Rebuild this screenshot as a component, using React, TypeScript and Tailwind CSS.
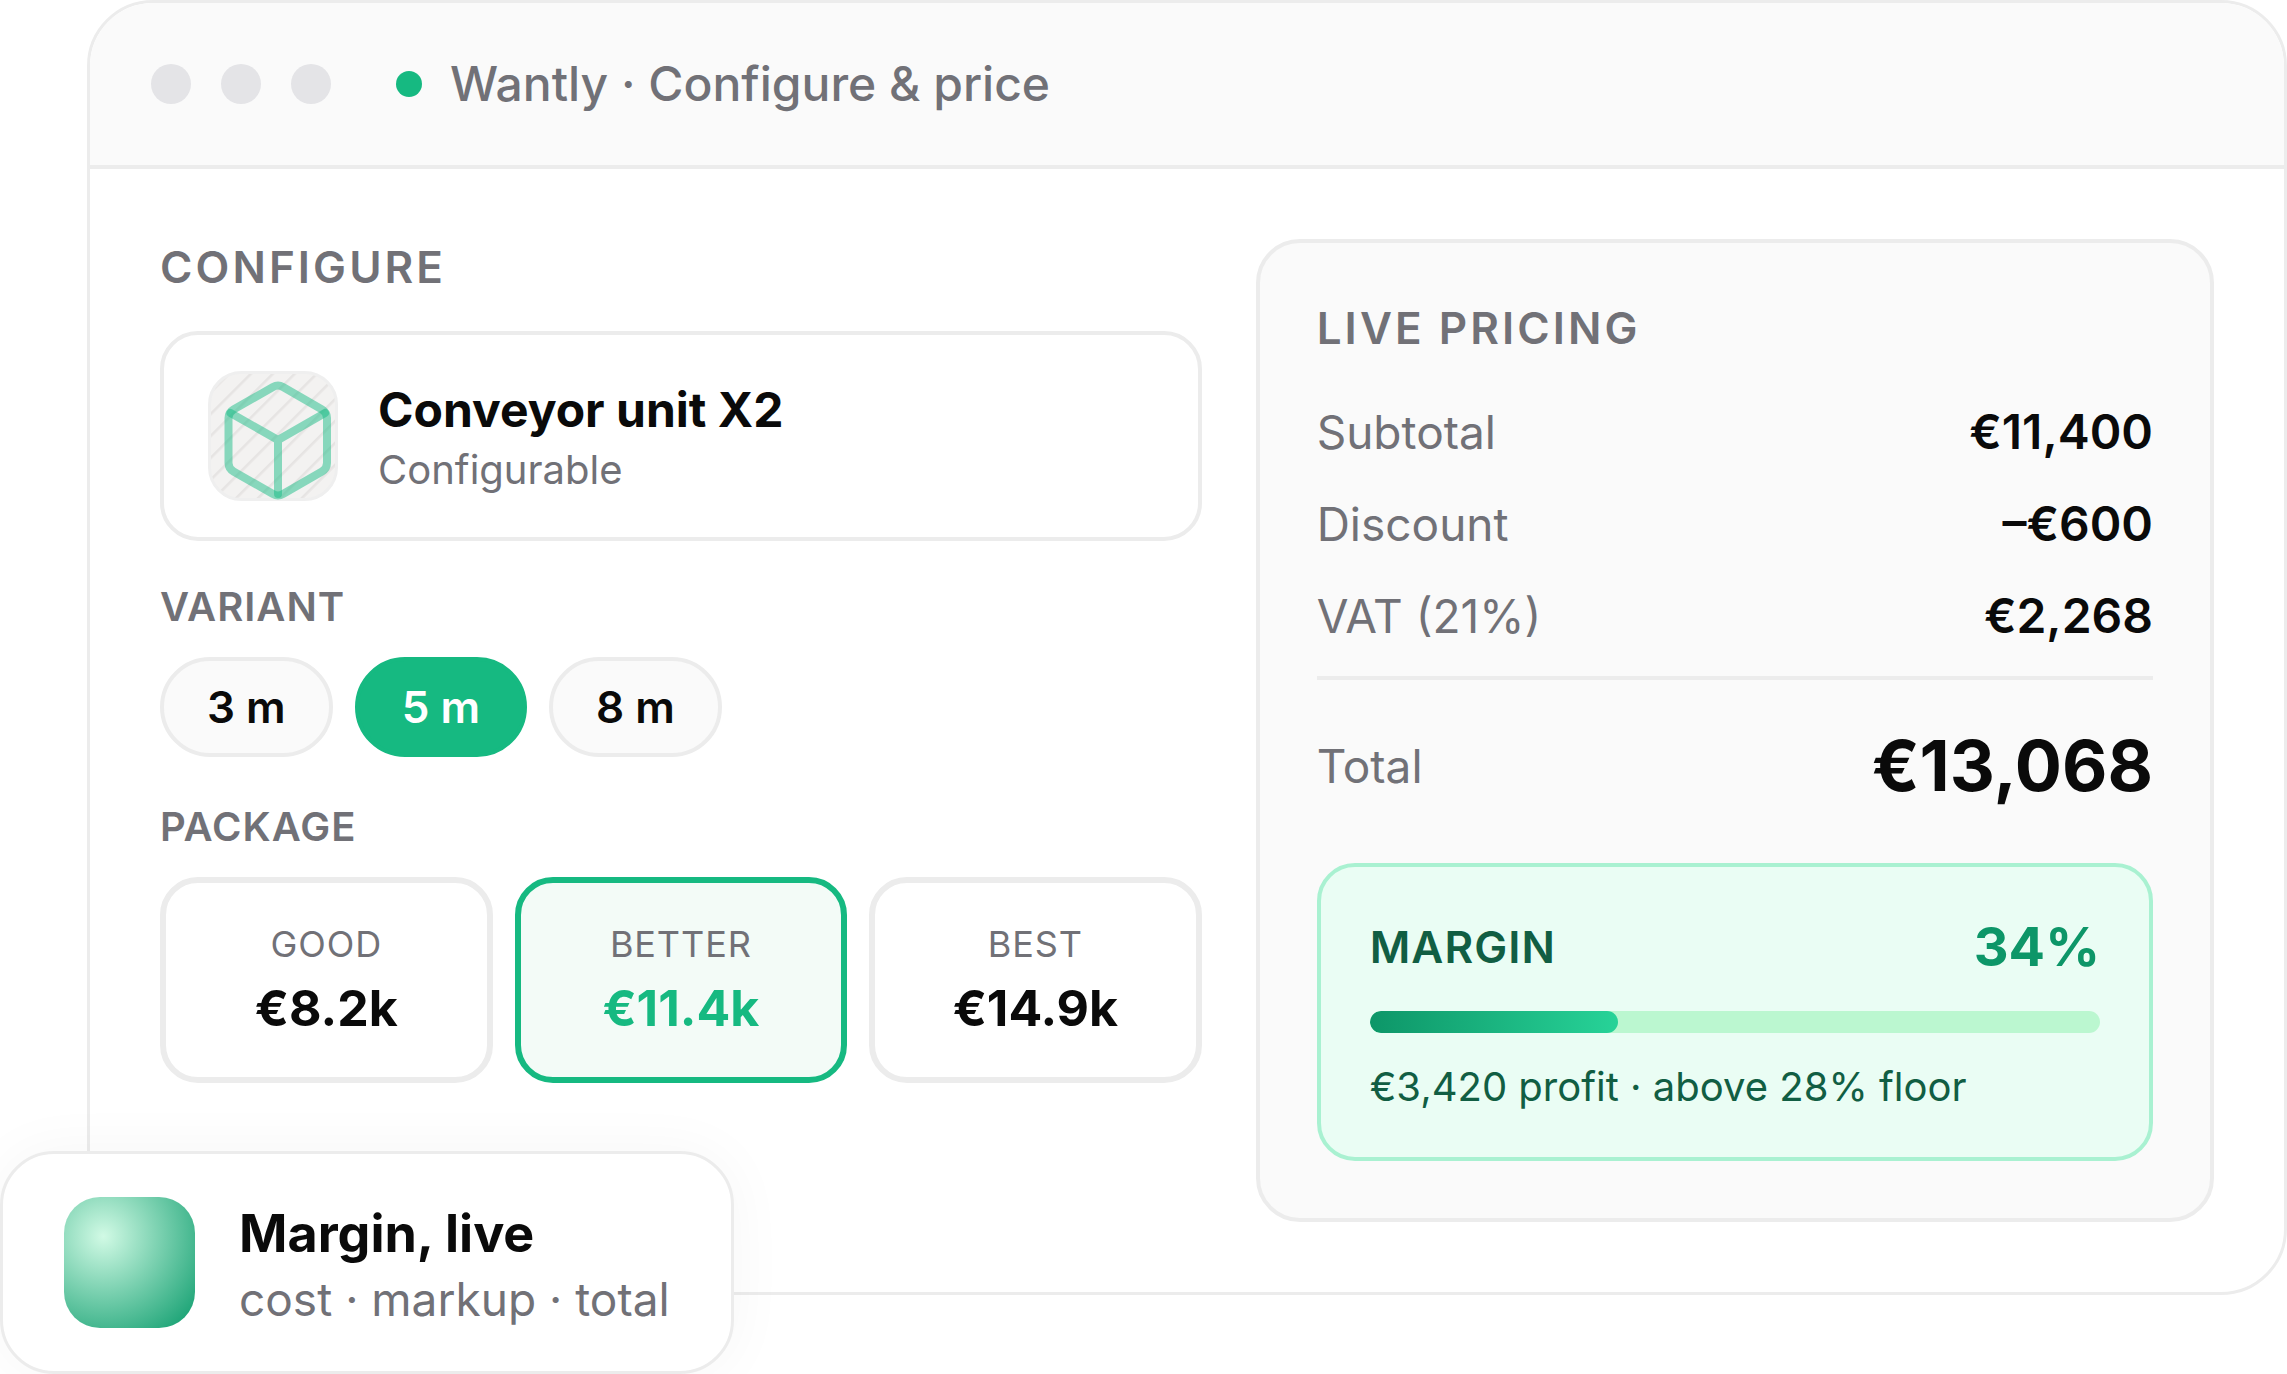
import { useState } from 'react';

const variants = ['3 m', '5 m', '8 m'];

const packages = [
  { name: 'Good', price: '€8.2k' },
  { name: 'Better', price: '€11.4k' },
  { name: 'Best', price: '€14.9k' },
];

const lines = [
  { label: 'Subtotal', value: '€11,400' },
  { label: 'Discount', value: '–€600' },
  { label: 'VAT (21%)', value: '€2,268' },
];

const margin = 34;

function ProductIcon() {
  return (
    <svg viewBox="0 0 130 130" className="size-[130px] shrink-0" aria-hidden="true">
      <defs>
        <pattern id="hatch" width="15.5" height="15.5" patternUnits="userSpaceOnUse" patternTransform="rotate(45)">
          <rect width="15.5" height="15.5" fill="#f3f2f1" />
          <rect width="2.5" height="15.5" fill="#e6e4e3" />
        </pattern>
      </defs>
      <rect x="1.5" y="1.5" width="127" height="127" rx="32" fill="url(#hatch)" stroke="#efefef" strokeWidth="3" />
      <g fill="none" stroke="#10b981" strokeOpacity="0.48" strokeWidth="8" strokeLinecap="round" strokeLinejoin="round">
        <path d="M119 92V47a10 10 0 0 0-5-8.500L75 16a10 10 0 0 0-10 0L25.500 38.500a10 10 0 0 0-5 8.500v45a10 10 0 0 0 5 8.500L65 123a10 10 0 0 0 10 0l39-22.500a10 10 0 0 0 5-8.500z" />
        <path d="M22.500 42 70 69l47-27M70 123V69" />
      </g>
    </svg>
  );
}

export default function App() {
  const [variant, setVariant] = useState('5 m');
  const [selected, setSelected] = useState('Better');

  return (
    <div className="relative bg-white pl-[87px] pb-[79px] font-[Inter,sans-serif] text-[#0a0a0a]">
      <main className="overflow-hidden rounded-[66px] border-[3px] border-[#ececec] bg-white">
        <header className="flex h-[166px] items-center border-b-4 border-[#ececec] bg-[#fafafa] px-[61px]">
          <div className="flex gap-[30px]">
            <span className="size-10 rounded-full bg-[#e4e4e7]"></span>
            <span className="size-10 rounded-full bg-[#e4e4e7]"></span>
            <span className="size-10 rounded-full bg-[#e4e4e7]"></span>
          </div>
          <span className="ml-[65px] size-[26px] rounded-full bg-[#16b981]"></span>
          <h1 className="ml-7 text-[48px] leading-[64px] font-medium text-[#717177]">Wantly · Configure &amp; price</h1>
        </header>

        <div className="grid grid-cols-[25fr_23fr] gap-[54px] p-[70px]">
          <section>
            <h2 className="text-[44px] leading-[56px] font-semibold tracking-[0.07em] text-[#717177] uppercase">Configure</h2>
            <div className="mt-9 flex items-center gap-10 rounded-[38px] border-4 border-[#ececec] px-11 py-9">
              <ProductIcon />
              <div>
                <h3 className="text-[48px] leading-[68px] font-bold">Conveyor unit X2</h3>
                <p className="text-[40px] leading-[52px] text-[#717177]">Configurable</p>
              </div>
            </div>

            <h3 className="mt-10 text-[40px] leading-[52px] font-semibold tracking-wide text-[#717177] uppercase">Variant</h3>
            <div className="mt-6 flex gap-[22px]">
              {variants.map((v) => (
                <button
                  key={v}
                  type="button"
                  aria-pressed={v === variant}
                  onClick={() => setVariant(v)}
                  className={`rounded-full border-4 px-[43px] py-[18px] text-[44px] leading-[56px] font-semibold ${
                    v === variant ? 'border-[#16b981] bg-[#16b981] text-white' : 'border-[#ececec] bg-[#fafafa]'
                  }`}
                >
                  {v}
                </button>
              ))}
            </div>

            <h3 className="mt-11 text-[40px] leading-[52px] font-semibold tracking-wide text-[#717177] uppercase">Package</h3>
            <div className="mt-6 grid grid-cols-3 gap-[22px]">
              {packages.map((p) => (
                <button
                  key={p.name}
                  type="button"
                  aria-pressed={p.name === selected}
                  onClick={() => setSelected(p.name)}
                  className={`rounded-[38px] border-[6px] py-[37px] text-center ${
                    p.name === selected ? 'border-[#16b981] bg-[#f3fbf7]' : 'border-[#ececec] bg-white'
                  }`}
                >
                  <span className="block text-[36px] leading-[48px] tracking-wide text-[#717177] uppercase">{p.name}</span>
                  <span className={`mt-2 block text-[50px] leading-[64px] font-bold ${p.name === selected ? 'text-[#16b981]' : ''}`}>
                    {p.price}
                  </span>
                </button>
              ))}
            </div>
          </section>

          <section className="rounded-[44px] border-4 border-[#ececec] bg-[#fafafa] p-[57px]">
            <h2 className="text-[44px] leading-[56px] font-semibold tracking-[0.07em] text-[#717177] uppercase">Live pricing</h2>
            <dl className="mt-11 flex flex-col gap-7 border-b-4 border-[#ececec] pb-7 text-[46px] leading-[64px]">
              {lines.map((line) => (
                <div key={line.label} className="flex justify-between">
                  <dt className="text-[#717177]">{line.label}</dt>
                  <dd className="text-[48px] font-semibold">{line.value}</dd>
                </div>
              ))}
            </dl>
            <dl className="mt-10 flex items-center justify-between">
              <dt className="text-[46px] leading-[64px] text-[#717177]">Total</dt>
              <dd className="text-[70px] leading-[92px] font-bold">€13,068</dd>
            </dl>

            <div className="mt-[51px] rounded-[38px] border-4 border-[#a9f1d1] bg-[#eafdf4] px-[49px] py-[42px]">
              <div className="flex items-center justify-between">
                <h3 className="text-[44px] leading-[56px] font-semibold tracking-wide text-[#115e43] uppercase">Margin</h3>
                <span className="text-[54px] leading-[76px] font-bold text-[#0d9668]">{margin}%</span>
              </div>
              <div
                role="progressbar"
                aria-label="Margin"
                aria-valuenow={margin}
                className="mt-[26px] h-[22px] overflow-hidden rounded-full bg-[#bbf7d0]"
              >
                <div className="h-full rounded-full bg-linear-to-r from-[#0d9668] to-[#27d398]" style={{ width: `${margin}%` }}></div>
              </div>
              <p className="mt-[26px] text-[40px] leading-[56px] text-[#115e43]">€3,420 profit · above 28% floor</p>
            </div>
          </section>
        </div>
      </main>

      <aside className="absolute bottom-0 left-0 flex items-center gap-11 rounded-[54px] border-[3px] border-[#ececec] bg-white px-[61px] py-[43px] shadow-[0_0_60px_rgba(0,0,0,0.04)]">
        <div className="size-[131px] rounded-[36px] bg-[radial-gradient(circle_at_30%_30%,#d1fae5,#0a9b6b)]"></div>
        <div>
          <p className="text-[52px] leading-[72px] font-bold">Margin, live</p>
          <p className="text-[46px] leading-[58px] text-[#717177]">cost · markup · total</p>
        </div>
      </aside>
    </div>
  );
}
